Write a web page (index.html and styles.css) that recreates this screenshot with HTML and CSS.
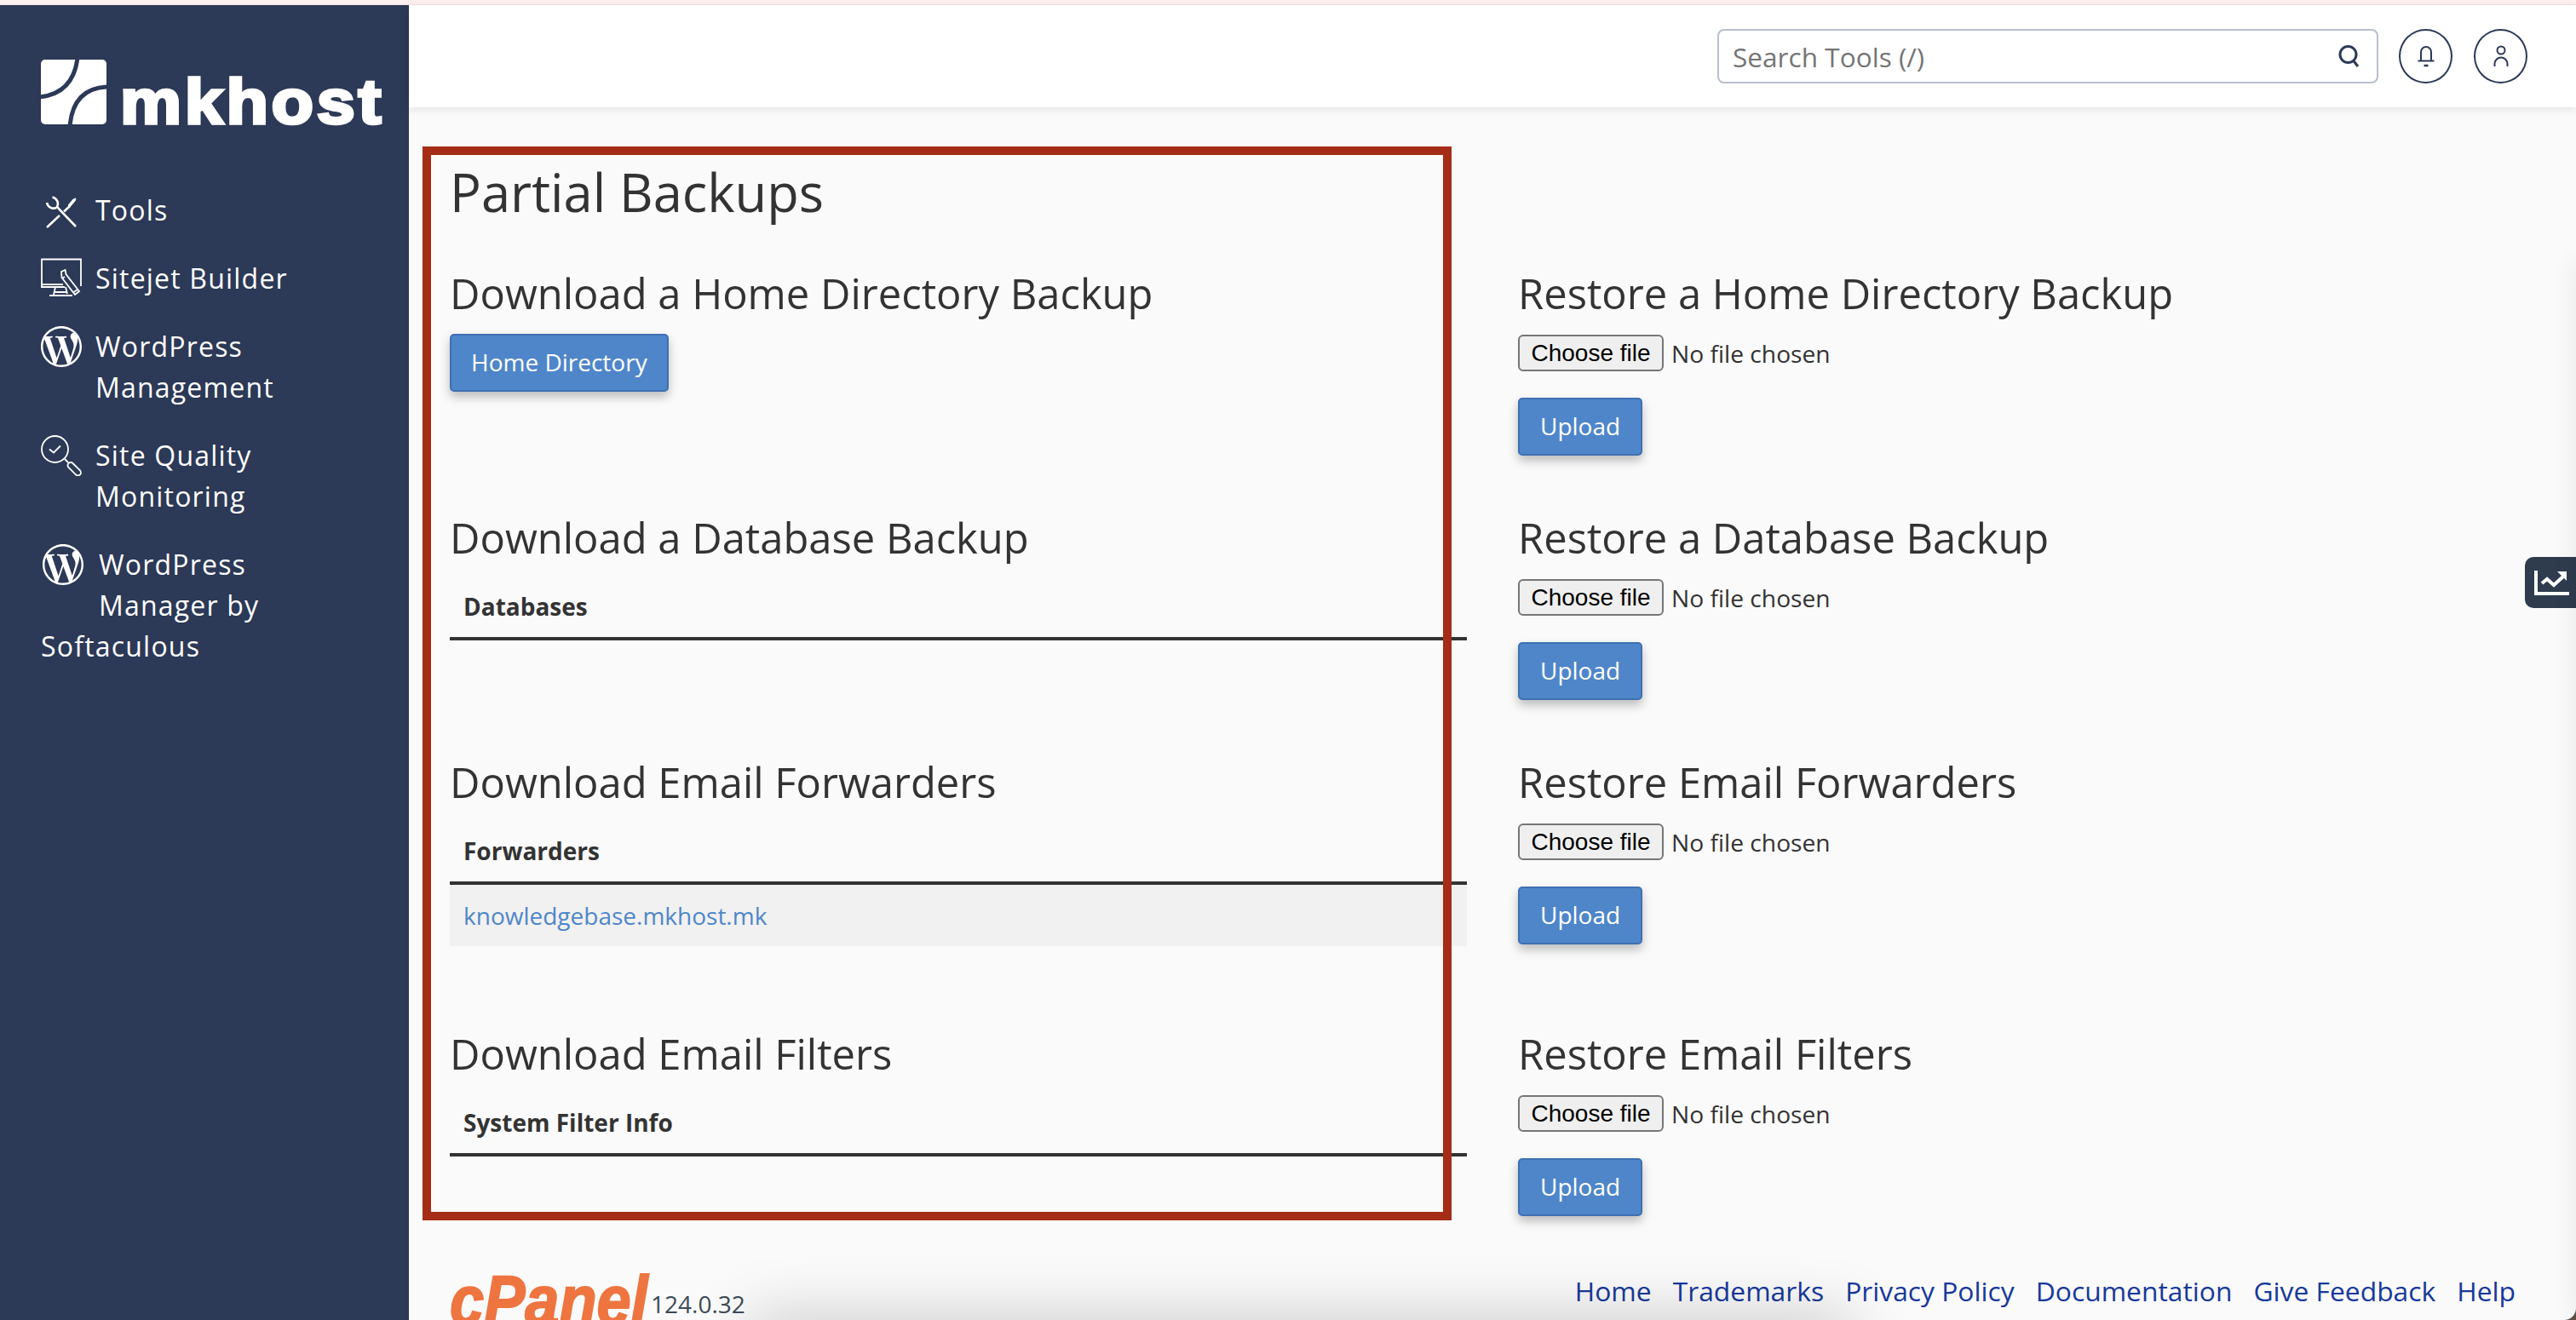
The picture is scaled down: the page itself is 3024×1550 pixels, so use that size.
FILE: index.html
```html
<!DOCTYPE html>
<html lang="en">
<head>
<meta charset="utf-8">
<title>Partial Backups</title>
<link rel="stylesheet" href="styles.css">
</head>
<body>
<div class="window">
  <div class="strip"></div>
  <div class="app">
    <aside class="sidebar">
      <a class="brand" href="#">
        <svg class="brand-mark" viewBox="0 0 77 76"><rect width="77" height="76" rx="5" fill="#fff"/><path d="M43-2Q38 40-2 44M79 32Q38 33 34 78" fill="none" stroke="#2c3957" stroke-width="5"/></svg>
        <span class="brand-name">mkhost</span>
      </a>
      <nav class="nav">
        <a class="nav-item" href="#">
          <svg class="nav-icon" viewBox="0 0 48 48" fill="none" stroke="#fff" stroke-width="2.600"><path d="M13.500 8.500A8 8 0 0 1 19 20L41 43M7 15A8 8 0 0 0 18 21"/><path d="M7 44L22 30M27 25.500L34 19"/><path d="M32 18l6-7 3-1-1 3-6 7z" fill="#fff" stroke-width="1"/></svg>
          Tools
        </a>
        <a class="nav-item" href="#">
          <svg class="nav-icon" viewBox="0 0 48 48" fill="none" stroke="#fff" stroke-width="1.800"><path d="M47 33V1.500H1V34h27"/><path d="M1 31h25"/><path d="M17 34l-2 9M29 34l2 8M10 44h27M15 40h15"/><path d="M24 16l4.500-2 1 5 15.500 20-5 4-15.500-20z" fill="#2c3957"/><path d="M28 22l-3 2M43 37l-5 3.500"/></svg>
          Sitejet Builder
        </a>
        <a class="nav-item" href="#">
          <svg class="nav-icon" viewBox="0 0 24 24"><path fill="#fff" d="M21.469 6.825c.84 1.537 1.318 3.3 1.318 5.175 0 3.979-2.156 7.456-5.363 9.325l3.295-9.527c.615-1.54.82-2.771.82-3.864 0-.405-.026-.78-.07-1.11m-7.981.105c.647-.03 1.232-.105 1.232-.105.582-.075.514-.93-.067-.899 0 0-1.755.135-2.88.135-1.064 0-2.85-.15-2.85-.15-.585-.03-.661.855-.075.885 0 0 .54.061 1.125.09l1.68 4.605-2.37 7.08L5.354 6.9c.649-.03 1.234-.1 1.234-.1.585-.075.516-.93-.065-.896 0 0-1.746.138-2.874.138-.2 0-.438-.008-.69-.015C4.911 3.15 8.235 1.215 12 1.215c2.809 0 5.365 1.072 7.286 2.833-.046-.003-.091-.009-.141-.009-1.06 0-1.812.923-1.812 1.914 0 .89.513 1.643 1.06 2.531.411.72.89 1.643.89 2.977 0 .915-.354 1.994-.821 3.479l-1.075 3.585-3.9-11.61.001.014zM12 22.784c-1.059 0-2.081-.153-3.048-.437l3.237-9.406 3.315 9.087c.024.053.05.101.078.149-1.12.393-2.325.609-3.582.609M1.211 12c0-1.564.336-3.05.935-4.39L7.29 21.709C3.694 19.96 1.212 16.271 1.211 12M12 0C5.385 0 0 5.385 0 12s5.385 12 12 12 12-5.385 12-12S18.615 0 12 0"/></svg>
          WordPress Management
        </a>
        <a class="nav-item" href="#">
          <svg class="nav-icon" viewBox="0 0 48 48" fill="none" stroke="#fff" stroke-width="1.800"><circle cx="16.500" cy="16.500" r="15.500"/><path d="M10 16.500l5 4 8-8"/><path d="M28 28l4 4"/><rect x="-3.500" y="0" width="7" height="19" rx="3.500" transform="translate(32.500 33) rotate(-45)"/></svg>
          Site Quality Monitoring
        </a>
        <a class="nav-item nav-item-last" href="#">
          <svg class="nav-icon" viewBox="0 0 24 24"><path fill="#fff" d="M21.469 6.825c.84 1.537 1.318 3.3 1.318 5.175 0 3.979-2.156 7.456-5.363 9.325l3.295-9.527c.615-1.54.82-2.771.82-3.864 0-.405-.026-.78-.07-1.11m-7.981.105c.647-.03 1.232-.105 1.232-.105.582-.075.514-.93-.067-.899 0 0-1.755.135-2.88.135-1.064 0-2.85-.15-2.85-.15-.585-.03-.661.855-.075.885 0 0 .54.061 1.125.09l1.68 4.605-2.37 7.08L5.354 6.9c.649-.03 1.234-.1 1.234-.1.585-.075.516-.93-.065-.896 0 0-1.746.138-2.874.138-.2 0-.438-.008-.69-.015C4.911 3.15 8.235 1.215 12 1.215c2.809 0 5.365 1.072 7.286 2.833-.046-.003-.091-.009-.141-.009-1.06 0-1.812.923-1.812 1.914 0 .89.513 1.643 1.06 2.531.411.72.89 1.643.89 2.977 0 .915-.354 1.994-.821 3.479l-1.075 3.585-3.9-11.61.001.014zM12 22.784c-1.059 0-2.081-.153-3.048-.437l3.237-9.406 3.315 9.087c.024.053.05.101.078.149-1.12.393-2.325.609-3.582.609M1.211 12c0-1.564.336-3.05.935-4.39L7.29 21.709C3.694 19.96 1.212 16.271 1.211 12M12 0C5.385 0 0 5.385 0 12s5.385 12 12 12 12-5.385 12-12S18.615 0 12 0"/></svg>
          WordPress Manager by Softaculous
        </a>
      </nav>
    </aside>
    <div class="main">
      <header class="topbar">
        <div class="search">
          <span class="search-text">Search Tools (/)</span>
          <svg class="search-icon" viewBox="0 0 28 28" fill="none" stroke="#2c3957" stroke-width="3"><circle cx="12.500" cy="12" r="9.500"/><path d="M18.500 19l5.500 7"/></svg>
        </div>
        <button class="round-btn" type="button" aria-label="Notifications">
          <svg viewBox="0 0 24 28" class="round-icon" fill="none" stroke="#2c3957" stroke-width="2"><path d="M6 19V9a6 6 0 0 1 12 0v10M2.500 19.500h19"/><path d="M9.500 25h5" stroke-width="2.500"/></svg>
        </button>
        <button class="round-btn" type="button" aria-label="Account">
          <svg viewBox="0 0 24 28" class="round-icon" fill="none" stroke="#2c3957" stroke-width="2"><circle cx="12" cy="7" r="4.500"/><path d="M4.500 26v-3a7.500 7.500 0 0 1 15 0v3"/></svg>
        </button>
      </header>
      <main class="content">
        <h1 class="page-title">Partial Backups</h1>
        <div class="backup-grid">
          <section class="cell">
            <h2 class="cell-title">Download a Home Directory Backup</h2>
            <a class="btn btn-wide" href="#">Home Directory</a>
          </section>
          <section class="cell">
            <h2 class="cell-title">Restore a Home Directory Backup</h2>
            <div class="file-row"><button class="file-btn" type="button">Choose file</button><span>No file chosen</span></div>
            <a class="btn" href="#">Upload</a>
          </section>
          <section class="cell">
            <h2 class="cell-title">Download a Database Backup</h2>
            <table class="data-table"><thead><tr><th>Databases</th></tr></thead></table>
          </section>
          <section class="cell">
            <h2 class="cell-title">Restore a Database Backup</h2>
            <div class="file-row"><button class="file-btn" type="button">Choose file</button><span>No file chosen</span></div>
            <a class="btn" href="#">Upload</a>
          </section>
          <section class="cell">
            <h2 class="cell-title">Download Email Forwarders</h2>
            <table class="data-table"><thead><tr><th>Forwarders</th></tr></thead><tbody><tr><td><a class="table-link" href="#">knowledgebase.mkhost.mk</a></td></tr></tbody></table>
          </section>
          <section class="cell">
            <h2 class="cell-title">Restore Email Forwarders</h2>
            <div class="file-row"><button class="file-btn" type="button">Choose file</button><span>No file chosen</span></div>
            <a class="btn" href="#">Upload</a>
          </section>
          <section class="cell">
            <h2 class="cell-title">Download Email Filters</h2>
            <table class="data-table"><thead><tr><th>System Filter Info</th></tr></thead></table>
          </section>
          <section class="cell">
            <h2 class="cell-title">Restore Email Filters</h2>
            <div class="file-row"><button class="file-btn" type="button">Choose file</button><span>No file chosen</span></div>
            <a class="btn" href="#">Upload</a>
          </section>
        </div>
        <footer class="footer">
          <div class="footer-brand"><span class="cpanel">cPanel</span><span class="version">124.0.32</span></div>
          <nav class="footer-links">
            <a href="#">Home</a><a href="#">Trademarks</a><a href="#">Privacy Policy</a><a href="#">Documentation</a><a href="#">Give Feedback</a><a href="#">Help</a>
          </nav>
        </footer>
      </main>
      <div class="highlight"></div>
      <div class="stats-tab">
        <svg viewBox="0 0 42 32" class="stats-icon" fill="none" stroke="#fff" stroke-width="4"><path d="M3 2v27h39" /><path d="M10 17l6-5 8 7 12-11"/><path d="M28 3h11v11z" fill="#fff" stroke="none"/></svg>
      </div>
      <div class="bottom-shade"></div>
      <div class="right-shade"></div>
    </div>
  </div>
</div>
</body>
</html>
```
FILE: styles.css
```css
* { box-sizing: border-box; }
html, body { margin: 0; height: 100%; background: #5a5048; }
body { font-family: "Open Sans", sans-serif; font-size: 28px; color: #333; overflow: hidden; }
a { text-decoration: none; }
.window { width: 3024px; height: 1550px; display: flex; flex-direction: column; background: #fafafa; border-bottom-right-radius: 14px; overflow: hidden; }
.strip { height: 6px; background: #fdf0ef; border-bottom: 1px solid #f5e3e5; flex: none; }
.app { flex: 1; display: flex; min-height: 0; }

.sidebar { width: 480px; flex: none; background: #2c3957; padding: 64px 60px 0 48px; color: #fff; }
.brand { display: flex; align-items: flex-end; gap: 16px; height: 76px; color: #fff; }
.brand-mark { width: 77px; height: 76px; flex: none; }
.brand-name { font-family: "Liberation Sans", Arial, sans-serif; font-weight: 700; font-size: 75px; line-height: 54px; height: 54px; letter-spacing: 3.4px; -webkit-text-stroke: 3.6px #fff; transform: scaleX(1.08); transform-origin: left bottom; }
.nav { margin-top: 77px; }
.nav-item { display: block; color: #fff; font-size: 32px; line-height: 48px; letter-spacing: 1.2px; margin-bottom: 32px; }
.nav-icon { float: left; width: 48px; height: 48px; margin: 0 16px 16px 0; }
.nav-item-last .nav-icon { margin-left: 2px; margin-right: 18px; }

.main { flex: 1; min-width: 0; position: relative; }
.topbar { height: 120px; background: #fff; display: flex; align-items: center; justify-content: flex-end; gap: 25px; padding: 0 57px 0 0; box-shadow: 0 2px 10px rgba(0,0,0,.1); position: relative; }
.search { width: 776px; height: 64px; border: 2px solid #b9bfcd; border-radius: 8px; display: flex; align-items: center; justify-content: space-between; padding: 0 18px 0 16px; margin-right: -1px; }
.search-text { color: #757575; font-size: 31.6px; }
.search-icon { width: 28px; height: 28px; }
.round-btn { width: 63px; height: 64px; border-radius: 50%; background: #fff; border: 2px solid #2c3957; padding: 0; display: flex; align-items: center; justify-content: center; }
.round-icon { width: 24px; height: 28px; }

.content { padding: 58px 48px 0; }
.page-title { margin: 0; font-weight: 400; font-size: 61.4px; line-height: 82px; }
.backup-grid { margin-top: 45px; display: grid; grid-template-columns: 1194px 1fr; column-gap: 60px; }
.cell { padding-bottom: 63px; }
.cell-title { margin: 0 0 16px; font-weight: 400; font-size: 48.9px; line-height: 66px; }
.btn { display: inline-block; height: 68px; line-height: 62px; padding: 0 24px; color: #fff; background: #4f86c9; border: 2px solid #3f70b2; border-radius: 5px; font-size: 28px; box-shadow: 0 6px 12px rgba(0,0,0,.25); }
.btn-wide { padding: 0 23px; margin-top: -1px; }
.file-row { display: flex; align-items: center; gap: 9px; height: 43px; margin-bottom: 31px; font-size: 28.2px; }
.file-btn { width: 171px; height: 43px; padding: 0; font-family: "Liberation Sans", Arial, sans-serif; font-size: 28px; color: #000; background: #efefef; border: 2px solid #767676; border-radius: 6px; }
.data-table { width: 100%; border-collapse: collapse; margin: 7px 0 30px; }
.data-table th { text-align: left; font-weight: 700; font-size: 28px; line-height: 38px; padding: 13px 16px 17px; border-bottom: 4px solid #333; }
.data-table td { background: #f1f1f1; padding: 17px 16px; line-height: 38px; }
.table-link { color: #4f86c9; }

.footer { display: flex; justify-content: space-between; align-items: flex-start; margin-top: 3px; }
.footer-brand { display: flex; align-items: flex-start; }
.cpanel { width: 236px; margin-top: 13px; font-family: "Liberation Sans", Arial, sans-serif; font-weight: 700; font-style: italic; font-size: 82px; line-height: 40px; color: #ee7540; -webkit-text-stroke: 2px #ee7540; transform: scaleX(.88); transform-origin: left top; }
.version { color: #3d4a58; font-size: 28px; line-height: 30px; margin-top: 22px; }
.footer-links { display: flex; gap: 25px; font-size: 31.8px; margin-right: 23px; }
.footer-links a { color: #17399b; }

.highlight { position: absolute; left: 16px; top: 166px; width: 1208px; height: 1261px; border: 10px solid #a52c16; pointer-events: none; }
.stats-tab { position: absolute; right: 0; top: 648px; width: 60px; height: 60px; background: #2e3c4e; border-radius: 10px 0 0 10px; display: flex; align-items: center; padding-left: 10px; }
.stats-icon { width: 42px; height: 32px; }
.bottom-shade { position: absolute; left: 400px; right: 850px; bottom: -40px; height: 40px; box-shadow: 0 0 70px rgba(0,0,0,.26); }
.right-shade { position: absolute; top: 300px; right: -30px; bottom: 0; width: 30px; box-shadow: 0 0 30px rgba(0,0,0,.08); }
```
